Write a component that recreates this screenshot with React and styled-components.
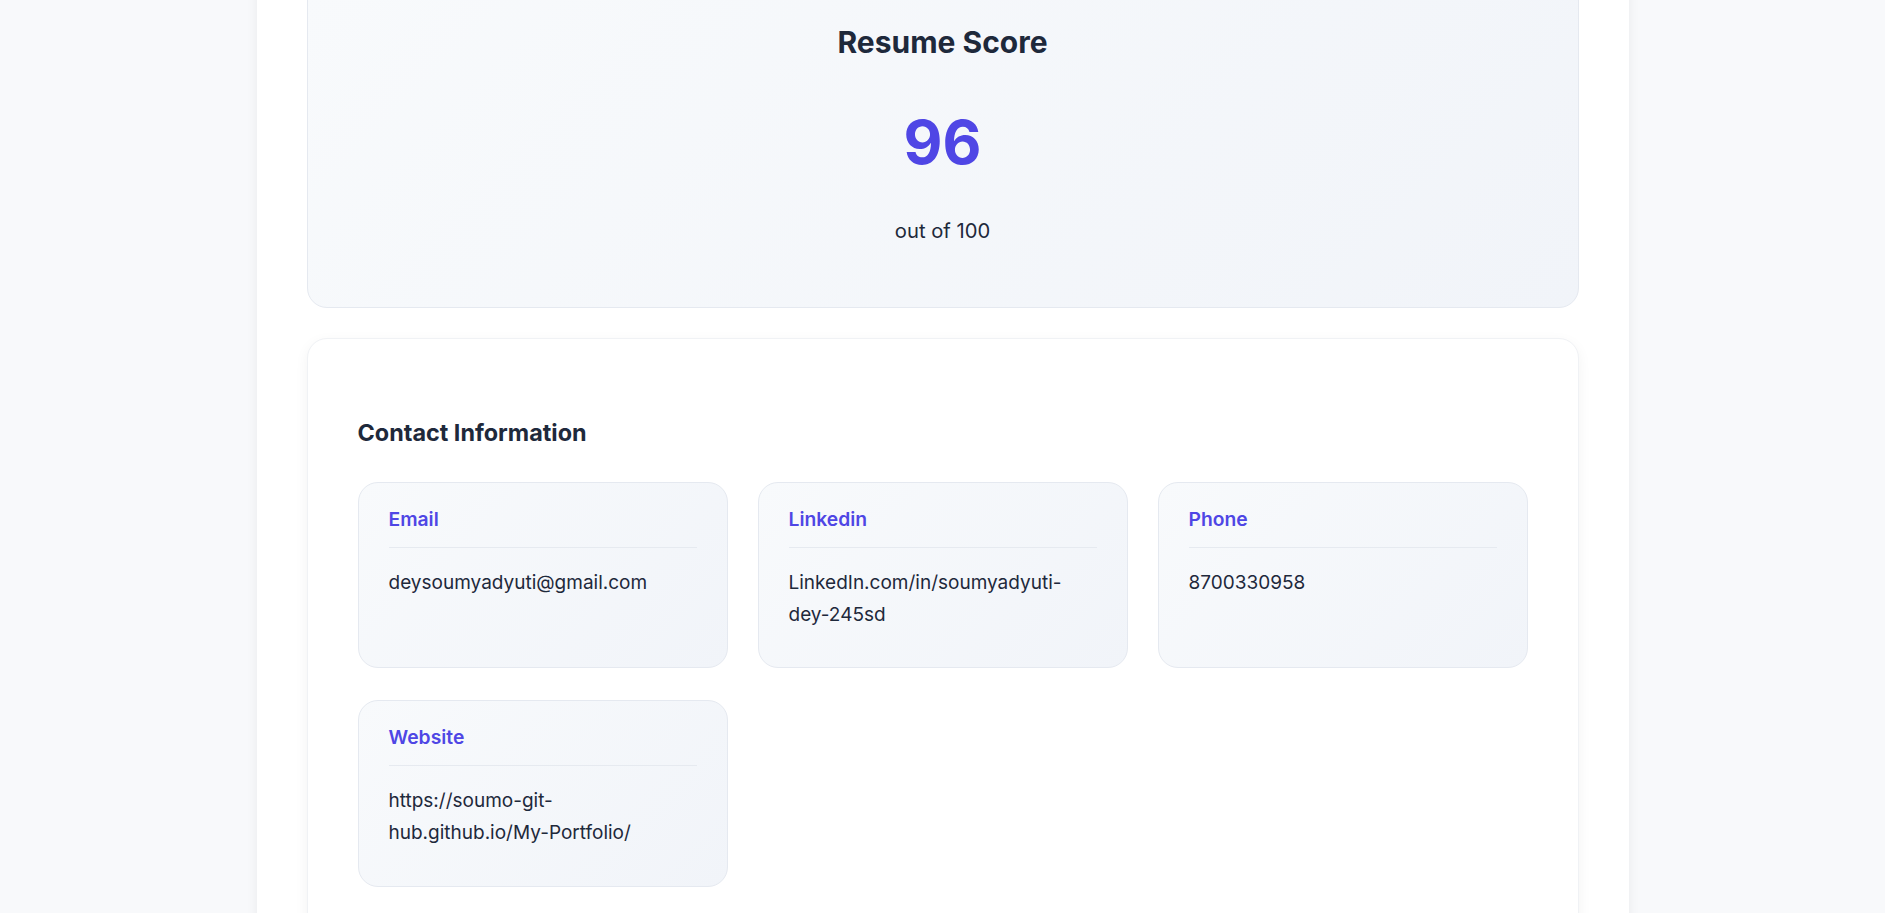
import React from 'react';
import styled, { createGlobalStyle } from 'styled-components';

const GlobalStyle = createGlobalStyle`
  html, body {
    margin: 0;
    padding: 0;
    overflow: hidden;
    background: #f8f9fb;
    font-family: Inter, "Noto Sans", "Liberation Sans", sans-serif;
    color: #1e293b;
  }
  * { box-sizing: border-box; }
`;

const Page = styled.div`
  width: 1372px;
  min-height: 100vh;
  margin: 0 auto;
  padding: 0 50px 60px;
  background: #fff;
  box-shadow: 0 0 12px rgba(15, 23, 42, 0.06);
`;

const ScoreCard = styled.section`
  margin-top: -24px;
  padding: 47px 40px 61px;
  border: 1px solid #e5e9f0;
  border-radius: 20px;
  background: linear-gradient(135deg, #f8fafc 0%, #f1f4f9 100%);
  text-align: center;
`;

const ScoreTitle = styled.h2`
  margin: 0;
  font-size: 30px;
  line-height: 1.2;
  font-weight: 700;
  color: #1e293b;
`;

const ScoreValue = styled.div`
  margin-top: 52px;
  font-size: 60px;
  line-height: 1;
  font-weight: 700;
  color: #4f46e5;
`;

const ScoreNote = styled.p`
  margin: 44px 0 0;
  font-size: 20.2px;
  line-height: 1.5;
  color: #1e293b;
`;

const SectionCard = styled.section`
  margin-top: 30px;
  padding: 79px 50px 60px;
  border: 1px solid #f0f2f5;
  border-radius: 20px;
  background: #fff;
  box-shadow: 0 4px 14px rgba(15, 23, 42, 0.05);
`;

const SectionTitle = styled.h3`
  margin: 0 0 33px;
  font-size: 23.4px;
  line-height: 1.3;
  font-weight: 700;
  color: #1e293b;
`;

const InfoGrid = styled.div`
  display: grid;
  grid-template-columns: repeat(3, 1fr);
  gap: 32px 30px;
`;

const InfoCard = styled.div`
  min-height: 186px;
  padding: 22px 30px 36px;
  border: 1px solid #e5e9f0;
  border-radius: 20px;
  background: linear-gradient(135deg, #f8fafc 0%, #f1f4f9 100%);
`;

const InfoLabel = styled.div`
  padding-bottom: 13px;
  border-bottom: 1px solid #e6eaf0;
  font-size: 19.3px;
  line-height: 1.5;
  font-weight: 600;
  color: #4f46e5;
`;

const InfoValue = styled.div`
  margin-top: 19px;
  font-size: 19px;
  line-height: 1.7;
  color: #1e293b;
  word-break: break-word;
`;

const contacts = [
  { label: 'Email', value: 'deysoumyadyuti@gmail.com' },
  { label: 'Linkedin', value: 'LinkedIn.com/in/soumyadyuti-dey-245sd' },
  { label: 'Phone', value: '8700330958' },
  { label: 'Website', value: 'https://soumo-git-hub.github.io/My-Portfolio/' },
];

const App = () => {
  return (
    <>
      <GlobalStyle />
      <Page>
        <ScoreCard>
          <ScoreTitle>Resume Score</ScoreTitle>
          <ScoreValue>96</ScoreValue>
          <ScoreNote>out of 100</ScoreNote>
        </ScoreCard>

        <SectionCard>
          <SectionTitle>Contact Information</SectionTitle>
          <InfoGrid>
            {contacts.map((item) => (
              <InfoCard key={item.label}>
                <InfoLabel>{item.label}</InfoLabel>
                <InfoValue>{item.value}</InfoValue>
              </InfoCard>
            ))}
          </InfoGrid>
        </SectionCard>
      </Page>
    </>
  );
};

export default App;
